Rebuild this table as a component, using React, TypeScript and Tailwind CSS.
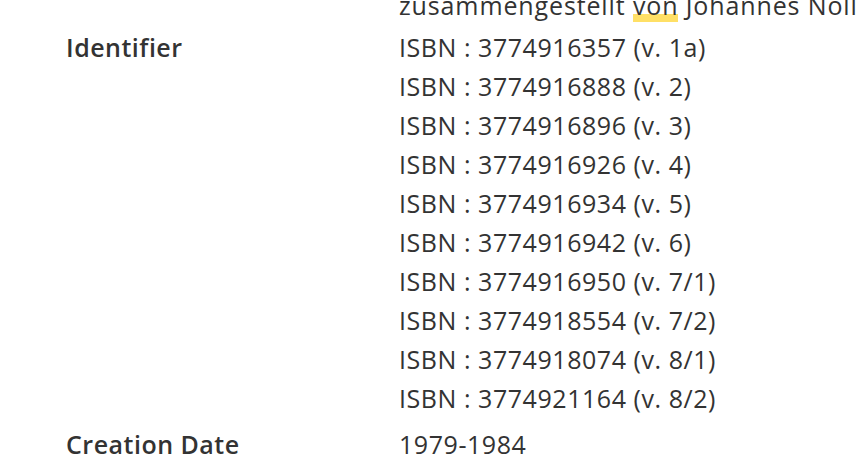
const isbns = [
  ["3774916357", "v. 1a"],
  ["3774916888", "v. 2"],
  ["3774916896", "v. 3"],
  ["3774916926", "v. 4"],
  ["3774916934", "v. 5"],
  ["3774916942", "v. 6"],
  ["3774916950", "v. 7/1"],
  ["3774918554", "v. 7/2"],
  ["3774918074", "v. 8/1"],
  ["3774921164", "v. 8/2"],
];

export default function App() {
  return (
    <div className="h-[476px] w-[866px] overflow-hidden bg-white font-['Open_Sans',sans-serif] text-[25px] leading-[39px] text-[#333]">
      <dl className="-mt-[14px] grid grid-cols-[333px_1fr] pl-[66px]">
        <dt />
        <dd className="whitespace-nowrap tracking-[0.035em]">
          zusammengestellt{" "}
          <span className="bg-[linear-gradient(transparent_76%,#ffe066_76%)]">von</span>{" "}
          Johannes Noll
        </dd>

        <dt className="mt-[3px] font-semibold tracking-[0.02em]">Identifier</dt>
        <dd className="mt-[3px] tracking-[0.022em]">
          {isbns.map(([num, vol]) => (
            <div key={num}>
              ISBN : {num} ({vol})
            </div>
          ))}
        </dd>

        <dt className="mt-[7px] font-semibold tracking-[0.02em]">Creation Date</dt>
        <dd className="mt-[7px] tracking-[0.022em]">1979-1984</dd>
      </dl>
    </div>
  );
}
